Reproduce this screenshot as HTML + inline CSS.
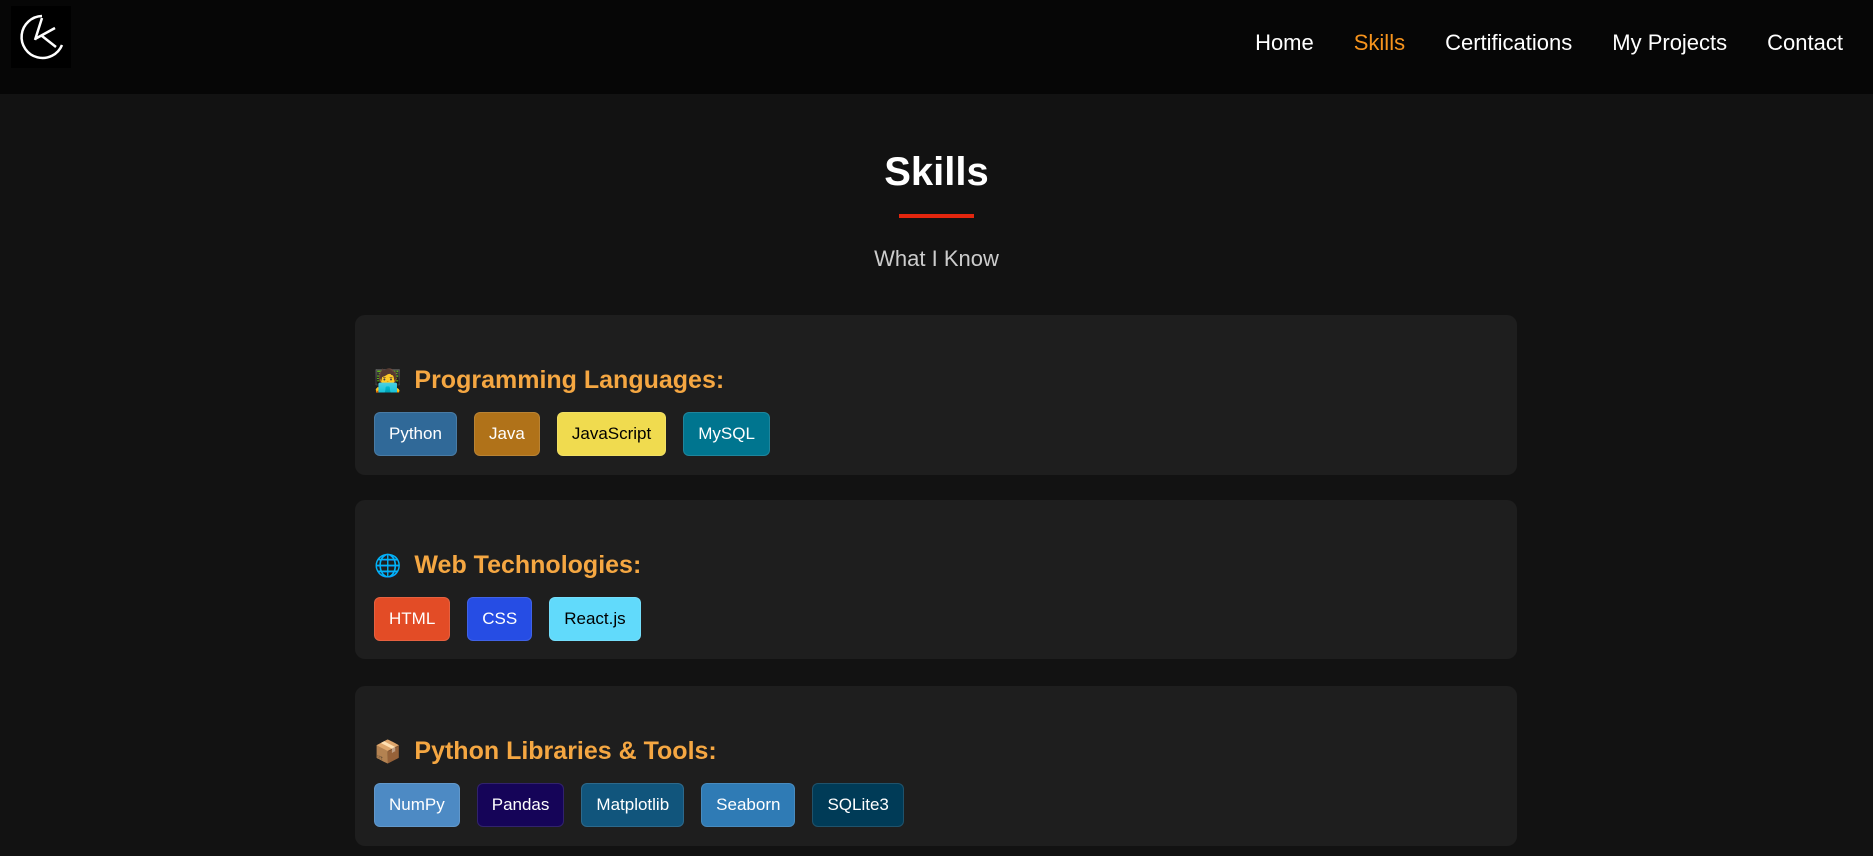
<!DOCTYPE html>
<html><head><meta charset="utf-8"><style>
*{margin:0;padding:0;box-sizing:border-box}
body{width:1873px;height:856px;overflow:hidden;background:#121212;font-family:"Liberation Sans",Arial,sans-serif;color:#fff;position:relative}
nav{position:absolute;left:0;top:0;width:1873px;height:94px;background:#060606}
.logo{position:absolute;left:11px;top:6px;width:60px;height:62px;background:#000}
.menu{position:absolute;right:30px;top:30px;font-size:22px}
.menu span{margin-left:40px}
.menu .a{color:#f7941d}
h1{position:absolute;left:0;width:1873px;top:150px;text-align:center;font-size:40px;font-weight:bold}
.ul{position:absolute;left:899px;top:214px;width:75px;height:4px;background:#e3260e}
.sub{position:absolute;left:0;width:1873px;top:246px;text-align:center;font-size:22px;color:#ccc}
.card{position:absolute;left:355px;width:1162px;background:#1e1e1e;border-radius:10px;padding-left:19px}
.card h3{position:absolute;left:19px;top:51px;font-size:25px;color:#f5a742;font-weight:bold}
.card h3 i{font-style:normal;font-family:"DejaVu Sans",sans-serif;font-size:22px;margin-right:13px}
.badges{position:absolute;left:19px;top:97px;display:flex;gap:17px}
.b{height:44px;line-height:42px;padding:0 14px;border-radius:6px;border:1px solid rgba(255,255,255,0.12);font-size:17px;color:#fff}
</style></head><body>
<nav><div class="logo"><svg width="60" height="62" viewBox="0 0 60 62"><path d="M31 10 A21 21 0 1 0 51 39" fill="none" stroke="#fff" stroke-width="2.5"/><path d="M31 12 L24 34 M24 33 L44 22 M31 30 L45 41" fill="none" stroke="#fff" stroke-width="2.5"/></svg></div>
<div class="menu"><span>Home</span><span class="a">Skills</span><span>Certifications</span><span>My Projects</span><span>Contact</span></div></nav>
<h1>Skills</h1><div class="ul"></div><div class="sub">What I Know</div>
<div class="card" style="top:315px;height:160px"><h3><i>🧑‍💻</i>Programming Languages:</h3><div class="badges">
<div class="b" style="background:#306998">Python</div><div class="b" style="background:#b07219">Java</div><div class="b" style="background:#f0db4f;color:#000">JavaScript</div><div class="b" style="background:#00758f">MySQL</div></div></div>
<div class="card" style="top:500px;height:159px"><h3><i>🌐</i>Web Technologies:</h3><div class="badges">
<div class="b" style="background:#e34c26">HTML</div><div class="b" style="background:#264de4">CSS</div><div class="b" style="background:#61dafb;color:#000">React.js</div></div></div>
<div class="card" style="top:686px;height:160px"><h3><i>📦</i>Python Libraries &amp; Tools:</h3><div class="badges">
<div class="b" style="background:#4d8ac4">NumPy</div><div class="b" style="background:#150458">Pandas</div><div class="b" style="background:#11557c">Matplotlib</div><div class="b" style="background:#2f7bb5">Seaborn</div><div class="b" style="background:#003b57">SQLite3</div></div></div>
</body></html>
